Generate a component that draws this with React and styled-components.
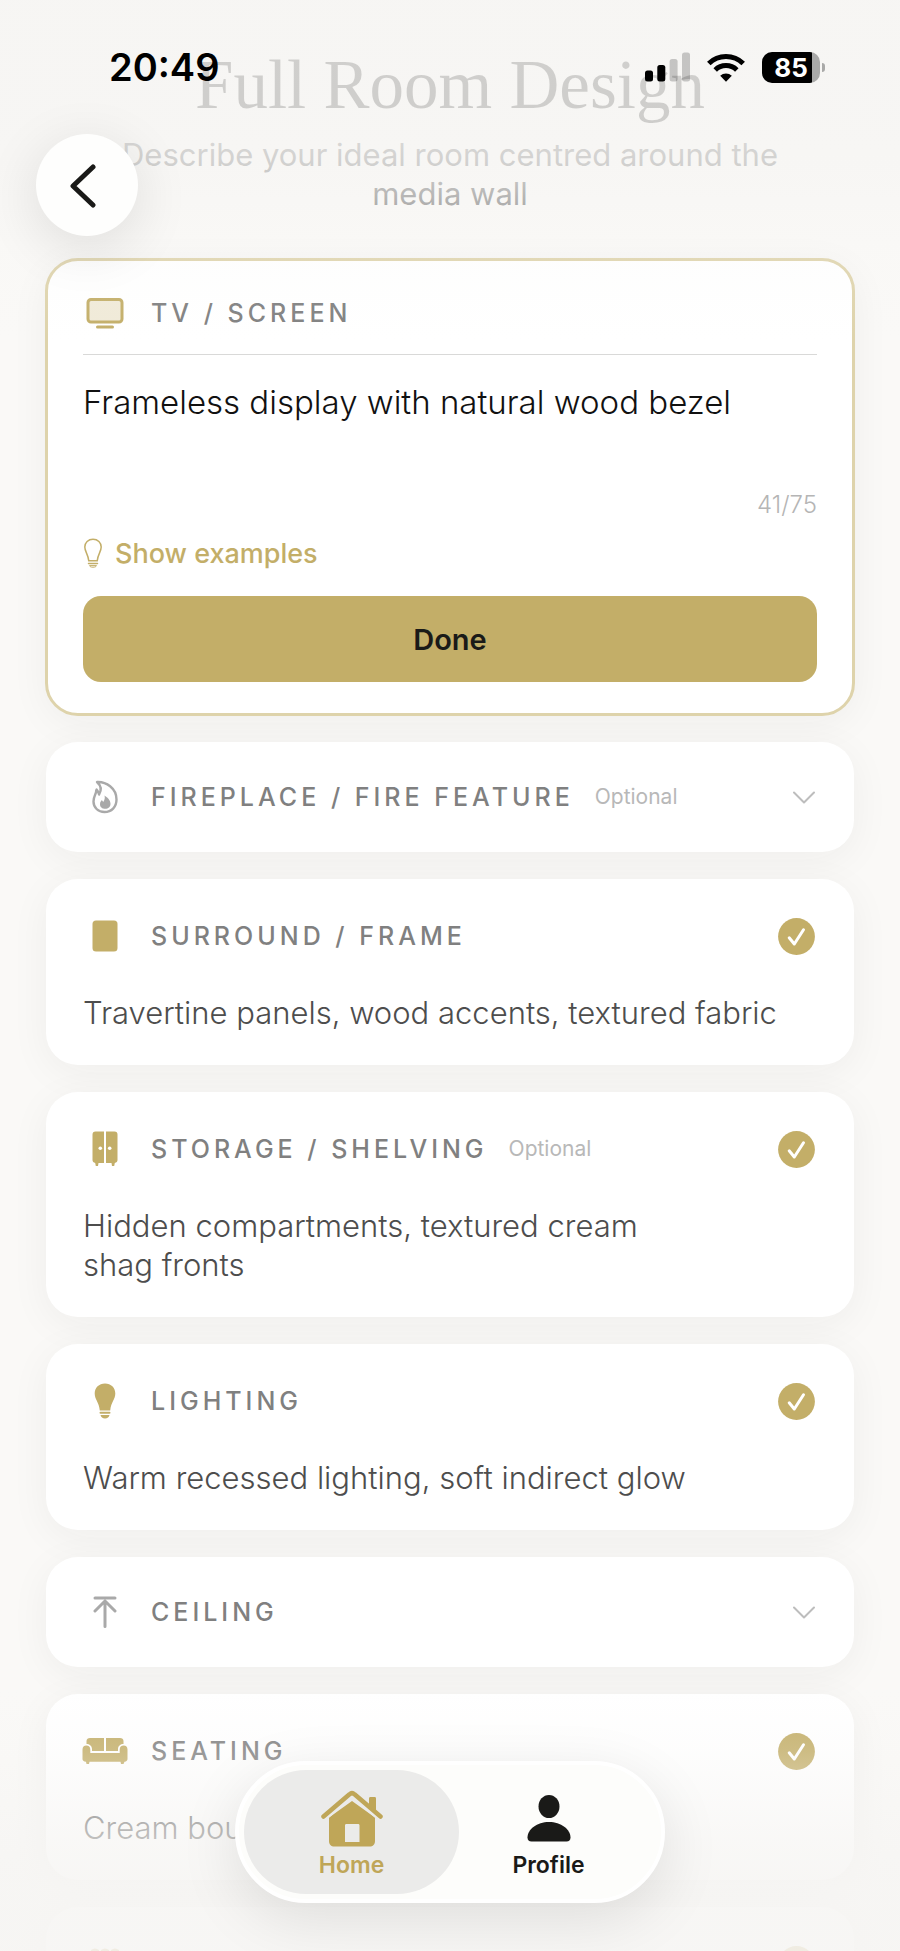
import React, { useState } from "react";
import styled, { createGlobalStyle } from "styled-components";

const GlobalStyle = createGlobalStyle`
  :root {
    --gold: #c3ae68;
    --gold-dark: #bfa658;
    --ink: #1a1a18;
    --page: #faf9f7;
    --fade: 246, 245, 243;
  }

  * {
    box-sizing: border-box;
  }

  body {
    margin: 0;
    background: var(--page);
    font-family: Inter, "Liberation Sans", sans-serif;
  }

  button {
    font-family: inherit;
    border: 0;
    padding: 0;
    background: none;
    cursor: pointer;
  }
`;

const Screen = styled.div`
  position: relative;
  height: 100vh;
  overflow: hidden;
`;

const Content = styled.main`
  padding: 39px 46px 0;
`;

const Heading = styled.header`
  text-align: center;
  padding-bottom: 46px;
`;

const Title = styled.h1`
  margin: 0 0 4px;
  font-family: "Liberation Serif", serif;
  font-weight: 400;
  font-size: 69px;
  line-height: 92px;
  color: var(--ink);
`;

const Subtitle = styled.p`
  margin: 0 auto;
  max-width: 700px;
  font-size: 31px;
  line-height: 39px;
  color: #707070;
`;

const List = styled.div`
  display: flex;
  flex-direction: column;
  gap: 27px;
`;

const Card = styled.section`
  background: #fff;
  border-radius: 32px;
  padding: 0 37px;
  box-shadow: 0 8px 40px rgba(40, 36, 30, 0.05);
  outline: ${(props) => (props.$active ? "3px solid #ded3ab" : "none")};
  outline-offset: -2px;
`;

const CardHead = styled.button`
  display: flex;
  align-items: center;
  width: 100%;
  height: ${(props) => (props.$filled ? "114px" : "110px")};
  text-align: left;
`;

const ActiveHead = styled(CardHead)`
  height: 96px;
  padding-top: 13px;
  border-bottom: 1px solid #d9d9d8;
`;

const IconSlot = styled.span`
  display: flex;
  justify-content: center;
  width: 46px;
  margin: 0 23px 0 -1px;
  color: ${(props) => (props.$muted ? "#a9a9a9" : "var(--gold)")};
`;

const CardTitle = styled.span`
  font-size: 25px;
  font-weight: 500;
  line-height: 32px;
  letter-spacing: 4px;
  text-transform: uppercase;
  color: #808080;
`;

const Optional = styled.span`
  margin-left: 21px;
  font-size: 21px;
  line-height: 32px;
  color: #b8b8b8;
`;

const Trailing = styled.span`
  display: flex;
  margin-left: auto;
  margin-right: 2px;
  color: ${(props) => (props.$done ? "var(--gold)" : "#bdbdbd")};
`;

const Summary = styled.p`
  margin: 0;
  padding: 0 0 33px;
  font-size: 31px;
  font-weight: 300;
  line-height: 39px;
  white-space: pre-line;
  color: #4d4d4d;
`;

const Editor = styled.textarea`
  display: block;
  width: 100%;
  height: 128px;
  padding: 28px 0 0;
  border: 0;
  outline: 0;
  resize: none;
  background: transparent;
  font-family: inherit;
  font-size: 33px;
  font-weight: 300;
  line-height: 39px;
  color: #111;
`;

const Counter = styled.div`
  text-align: right;
  font-size: 24px;
  font-weight: 300;
  line-height: 44px;
  color: #b5b5b5;
`;

const Examples = styled.button`
  display: flex;
  align-items: center;
  gap: 12px;
  height: 52px;
  font-size: 27px;
  font-weight: 500;
  color: var(--gold);
`;

const Done = styled.button`
  display: block;
  width: 100%;
  height: 86px;
  margin: 17px 0 33px;
  border-radius: 18px;
  background: var(--gold);
  font-size: 29px;
  font-weight: 600;
  color: var(--ink);
`;

const TopFade = styled.div`
  position: absolute;
  inset: 0 0 auto;
  height: 340px;
  pointer-events: none;
  background: linear-gradient(
    rgba(var(--fade), 0.83) 0,
    rgba(var(--fade), 0.82) 120px,
    rgba(var(--fade), 0.72) 165px,
    rgba(var(--fade), 0.5) 200px,
    rgba(var(--fade), 0.15) 260px,
    rgba(var(--fade), 0) 340px
  );
`;

const BottomFade = styled.div`
  position: absolute;
  inset: auto 0 0;
  height: 260px;
  pointer-events: none;
  background: linear-gradient(
    rgba(var(--fade), 0) 0,
    rgba(var(--fade), 0.2) 60px,
    rgba(var(--fade), 0.64) 138px,
    rgba(var(--fade), 0.86) 190px,
    rgba(var(--fade), 0.88) 260px
  );
`;

const StatusBar = styled.div`
  position: absolute;
  inset: 44px 75px auto 109px;
  display: flex;
  align-items: center;
  height: 46px;
  font-size: 38px;
  font-weight: 600;
  color: #000;
`;

const StatusIcons = styled.div`
  display: flex;
  align-items: center;
  gap: 17px;
  margin-left: auto;
`;

const Battery = styled.span`
  position: relative;
  width: 58px;
  height: 31px;
  margin-right: 5px;
  border-radius: 10px;
  background: linear-gradient(90deg, #000 86%, #a9a9a8 86%);
  font-size: 26px;
  font-weight: 700;
  line-height: 31px;
  text-align: center;
  color: #fff;

  &::after {
    content: "";
    position: absolute;
    left: 60px;
    top: 11px;
    width: 3px;
    height: 9px;
    border-radius: 0 4px 4px 0;
    background: #a9a9a8;
  }
`;

const BackButton = styled.button`
  position: absolute;
  left: 36px;
  top: 134px;
  display: flex;
  align-items: center;
  justify-content: center;
  width: 102px;
  height: 102px;
  padding-right: 8px;
  border-radius: 50%;
  background: #fefefd;
  box-shadow: 0 12px 56px rgba(0, 0, 0, 0.11);
  color: var(--ink);
`;

const TabBar = styled.nav`
  position: absolute;
  bottom: 48px;
  left: 50%;
  transform: translateX(-50%);
  display: flex;
  padding: 5px;
  border: 4px solid #fff;
  border-radius: 71px;
  background: #fdfdfb;
  box-shadow: 0 16px 60px rgba(0, 0, 0, 0.1);
`;

const Tab = styled.a`
  display: flex;
  flex-direction: column;
  align-items: center;
  justify-content: flex-end;
  gap: 4px;
  width: 215px;
  height: 124px;
  padding-bottom: 15px;
  border-radius: 62px;
  background: ${(props) => (props.$selected ? "#ebebea" : "transparent")};
  font-size: 23px;
  font-weight: 600;
  line-height: 28px;
  text-decoration: none;
  color: ${(props) => (props.$selected ? "var(--gold-dark)" : "var(--ink)")};

  & + & {
    margin-left: -18px;
  }
`;

const TvIcon = () => (
  <svg width="38" height="32" viewBox="0 0 38 32" fill="none" stroke="currentColor" strokeWidth="3">
    <rect x="2" y="2.5" width="34" height="22.5" rx="3" fill="#f0ead8" />
    <path d="M11.500 30h15" strokeLinecap="round" />
  </svg>
);

const FlameIcon = () => (
  <svg width="26" height="34" viewBox="0 0 26 34" fill="none">
    <path
      d="M5 2C14 1.500 24.500 8 24.500 19.500C24.500 27 19.500 32 12.500 32C6 32 1.500 27.500 1.500 21.500C1.500 17.500 3 15 4 12.500C4 10.500 4.200 9.800 4.600 9.500C6 11 6.800 12.500 7 14.500C9.500 10.500 9.500 6 5 2Z"
      stroke="currentColor"
      strokeWidth="2.400"
      strokeLinejoin="round"
    />
    <path
      d="M12.500 15.500C15 17 18.500 20 18.500 23.800C18.500 27 16.200 28.800 13.300 28.800C10.200 28.800 8 27 8 24.200C8 22.200 9 21.200 9.800 20C10.400 20.600 10.800 21.200 11.200 22C12.600 20 13.200 18 12.500 15.500Z"
      fill="currentColor"
    />
  </svg>
);

const FrameIcon = () => (
  <svg width="26" height="32" viewBox="0 0 26 32" fill="currentColor">
    <rect x="0.500" y="0.500" width="25" height="31" rx="3.500" />
  </svg>
);

const CabinetIcon = () => (
  <svg width="26" height="36" viewBox="0 0 26 36" fill="currentColor">
    <path d="M3.500 0.500H12V32H6.500L6 35H3.800L3.200 32C1.500 31.500 0.500 30.500 0.500 29V3.500C0.500 1.500 1.500 0.500 3.500 0.500Z" />
    <path d="M22.500 0.500H14V32H19.500L20 35H22.200L22.800 32C24.500 31.500 25.500 30.500 25.500 29V3.500C25.500 1.500 24.500 0.500 22.500 0.500Z" />
    <circle cx="8.300" cy="17.200" r="1.800" fill="#fff" />
    <circle cx="17.700" cy="17.200" r="1.800" fill="#fff" />
  </svg>
);

const BulbIcon = () => (
  <svg width="22" height="36" viewBox="0 0 22 36" fill="currentColor">
    <path d="M11 0.500C17 0.500 21.300 4.700 21.300 10.500C21.300 16.500 17 19 16.200 27.500H5.800C5 19 0.700 16.500 0.700 10.500C0.700 4.700 5 0.500 11 0.500Z" />
    <rect x="5.500" y="28.700" width="11" height="2" rx="1" />
    <path d="M6.500 32H15.500C15 34.300 13.500 35.500 11 35.500S7 34.300 6.500 32Z" />
  </svg>
);

const BulbOutlineIcon = () => (
  <svg width="20" height="30" viewBox="0 0 20 30" fill="none" stroke="currentColor" strokeWidth="1.500">
    <path d="M10 1.200C14.800 1.200 18.200 4.600 18.200 9C18.200 13.500 15 16 14.200 22.800H5.800C5 16 1.800 13.500 1.800 9C1.800 4.600 5.200 1.200 10 1.200Z" />
    <path d="M5.500 25.500h9" strokeLinecap="round" />
    <path d="M6.500 27.600H13.500C13 28.800 12 29.200 10 29.200S7 28.800 6.500 27.600Z" strokeWidth="1" />
  </svg>
);

const CeilingIcon = () => (
  <svg width="24" height="34" viewBox="0 0 24 34" fill="none" stroke="currentColor" strokeWidth="3" strokeLinecap="round" strokeLinejoin="round">
    <path d="M2 3H22M12 6V31.500M2 16L12 6L22 16" />
  </svg>
);

const SofaIcon = () => (
  <svg width="46" height="28" viewBox="0 0 46 28" fill="currentColor">
    <path d="M4.500 7V4C4.500 2 6 1 8 1H22V14H10V12C10 9 7.500 7 4.500 7Z" />
    <path d="M41.500 7V4C41.500 2 40 1 38 1H24V14H36V12C36 9 38.500 7 41.500 7Z" />
    <path d="M0.500 12.500C0.500 10 2 8.500 4.300 8.500C6.800 8.500 8.300 10 8.300 12.500V16H37.700V12.500C37.700 10 39.200 8.500 41.700 8.500C44 8.500 45.500 10 45.500 12.500V22C45.500 23.500 44.500 24.500 42.500 24.700L41.500 27H39L38.500 24.700H7.500L7 27H4.500L4 24.700C1.500 24.500 0.500 23.500 0.500 22Z" />
  </svg>
);

const RugIcon = () => (
  <svg width="28" height="32" viewBox="0 0 28 32" fill="currentColor">
    <path d="M0 2Q4 -1 8 2V32H0ZM10 2Q14 -1 18 2V32H10ZM20 2Q24 -1 28 2V32H20Z" />
  </svg>
);

const CheckIcon = () => (
  <svg width="37" height="37" viewBox="0 0 37 37" fill="none">
    <circle cx="18.500" cy="18.500" r="18.400" fill="currentColor" />
    <path d="M11.200 19.800L16.300 26L25.500 11.800" stroke="#fff" strokeWidth="3" strokeLinecap="round" strokeLinejoin="round" />
  </svg>
);

const ChevronIcon = () => (
  <svg width="22" height="13" viewBox="0 0 22 13" fill="none" stroke="currentColor" strokeWidth="2" strokeLinecap="round" strokeLinejoin="round">
    <path d="M1 1.500L11 11.500L21 1.500" />
  </svg>
);

const BackIcon = () => (
  <svg width="26" height="46" viewBox="0 0 26 46" fill="none" stroke="currentColor" strokeWidth="5" strokeLinecap="round" strokeLinejoin="round">
    <path d="M23 5L3 24L23 43" />
  </svg>
);

const HomeIcon = () => (
  <svg width="64" height="57" viewBox="0 0 64 57" fill="currentColor">
    <path d="M9 27.500L32 11L55 27.500V51C55 54.500 53 56.500 49.500 56.500H14.500C11 56.500 9 54.500 9 51ZM26.500 34C25.500 34 25 34.500 25 35.500V52H39.500V35.500C39.500 34.500 39 34 38 34Z" fillRule="evenodd" />
    <path d="M3.500 26.500L29.500 4.300Q32 2 34.500 4.300L60.500 26.500" fill="none" stroke="#ebebea" strokeWidth="9" />
    <path d="M3.500 26.500L29.500 4.300Q32 2 34.500 4.300L60.500 26.500" fill="none" stroke="currentColor" strokeWidth="4.500" strokeLinecap="round" />
    <path d="M49 16.500V8.500C49 7.500 49.500 7 50.500 7H54.500C55.500 7 56 7.500 56 8.500V22.500Z" />
  </svg>
);

const ProfileIcon = () => (
  <svg width="44" height="54" viewBox="0 0 44 54" fill="currentColor">
    <ellipse cx="22" cy="13.500" rx="10.500" ry="11.500" />
    <path d="M22 29C34 29 43.500 36.500 43.500 44.500C43.500 47 42 48.500 39.500 48.500H4.500C2 48.500 0.500 47 0.500 44.500C0.500 36.500 10 29 22 29Z" />
  </svg>
);

const SignalIcon = () => (
  <svg width="45" height="30" viewBox="0 0 45 30" fill="#000">
    <rect x="0" y="18.500" width="8" height="11" rx="2.500" />
    <rect x="12.300" y="13" width="8" height="16.500" rx="2.500" />
    <rect x="24.600" y="7" width="8" height="22.500" rx="2.500" opacity="0.2" />
    <rect x="37" y="0.500" width="8" height="29" rx="2.500" opacity="0.2" />
  </svg>
);

const WifiIcon = () => (
  <svg width="38" height="29" viewBox="0 0 38 29" fill="none" stroke="#000" strokeWidth="5">
    <path d="M1.800 10.500A24.500 24.500 0 0 1 36.200 10.500" />
    <path d="M8.200 17A15.500 15.500 0 0 1 29.800 17" />
    <path d="M19 28.800L13.200 22.800A8.500 8.500 0 0 1 24.800 22.800Z" fill="#000" stroke="none" />
  </svg>
);

const sections = [
  { id: "fireplace", title: "Fireplace / Fire Feature", icon: FlameIcon, optional: true },
  { id: "surround", title: "Surround / Frame", icon: FrameIcon, text: "Travertine panels, wood accents, textured fabric" },
  {
    id: "storage",
    title: "Storage / Shelving",
    icon: CabinetIcon,
    optional: true,
    text: "Hidden compartments, textured cream\nshag fronts",
  },
  { id: "lighting", title: "Lighting", icon: BulbIcon, text: "Warm recessed lighting, soft indirect glow" },
  { id: "ceiling", title: "Ceiling", icon: CeilingIcon },
  { id: "seating", title: "Seating", icon: SofaIcon, text: "Cream bouclé" },
];

const SectionCard = ({ title, icon: Icon, optional, text }) => (
  <Card>
    <CardHead type="button" $filled={!!text}>
      <IconSlot $muted={!text}>
        <Icon />
      </IconSlot>
      <CardTitle>{title}</CardTitle>
      {optional && <Optional>Optional</Optional>}
      <Trailing $done={!!text}>{text ? <CheckIcon /> : <ChevronIcon />}</Trailing>
    </CardHead>
    {text && <Summary>{text}</Summary>}
  </Card>
);

const App = () => {
  const [tv, setTv] = useState("Frameless display with natural wood bezel");

  return (
    <Screen>
      <GlobalStyle />
      <Content>
        <Heading>
          <Title>Full Room Design</Title>
          <Subtitle>Describe your ideal room centred around the media wall</Subtitle>
        </Heading>
        <List>
          <Card $active>
            <ActiveHead as="label" htmlFor="tv">
              <IconSlot>
                <TvIcon />
              </IconSlot>
              <CardTitle>TV / Screen</CardTitle>
            </ActiveHead>
            <Editor id="tv" maxLength={75} value={tv} onChange={(e) => setTv(e.target.value)} />
            <Counter>{tv.length}/75</Counter>
            <Examples type="button">
              <BulbOutlineIcon />
              Show examples
            </Examples>
            <Done type="button">Done</Done>
          </Card>
          {sections.map((section) => (
            <SectionCard key={section.id} {...section} />
          ))}
          <Card>
            <CardHead type="button" $filled>
              <IconSlot>
                <RugIcon />
              </IconSlot>
              <Trailing $done>
                <CheckIcon />
              </Trailing>
            </CardHead>
          </Card>
        </List>
      </Content>

      <TopFade />
      <BottomFade />

      <StatusBar>
        20:49
        <StatusIcons>
          <SignalIcon />
          <WifiIcon />
          <Battery>85</Battery>
        </StatusIcons>
      </StatusBar>
      <BackButton type="button" aria-label="Back">
        <BackIcon />
      </BackButton>
      <TabBar>
        <Tab href="#home" $selected>
          <HomeIcon />
          Home
        </Tab>
        <Tab href="#profile">
          <ProfileIcon />
          Profile
        </Tab>
      </TabBar>
    </Screen>
  );
};

export default App;
